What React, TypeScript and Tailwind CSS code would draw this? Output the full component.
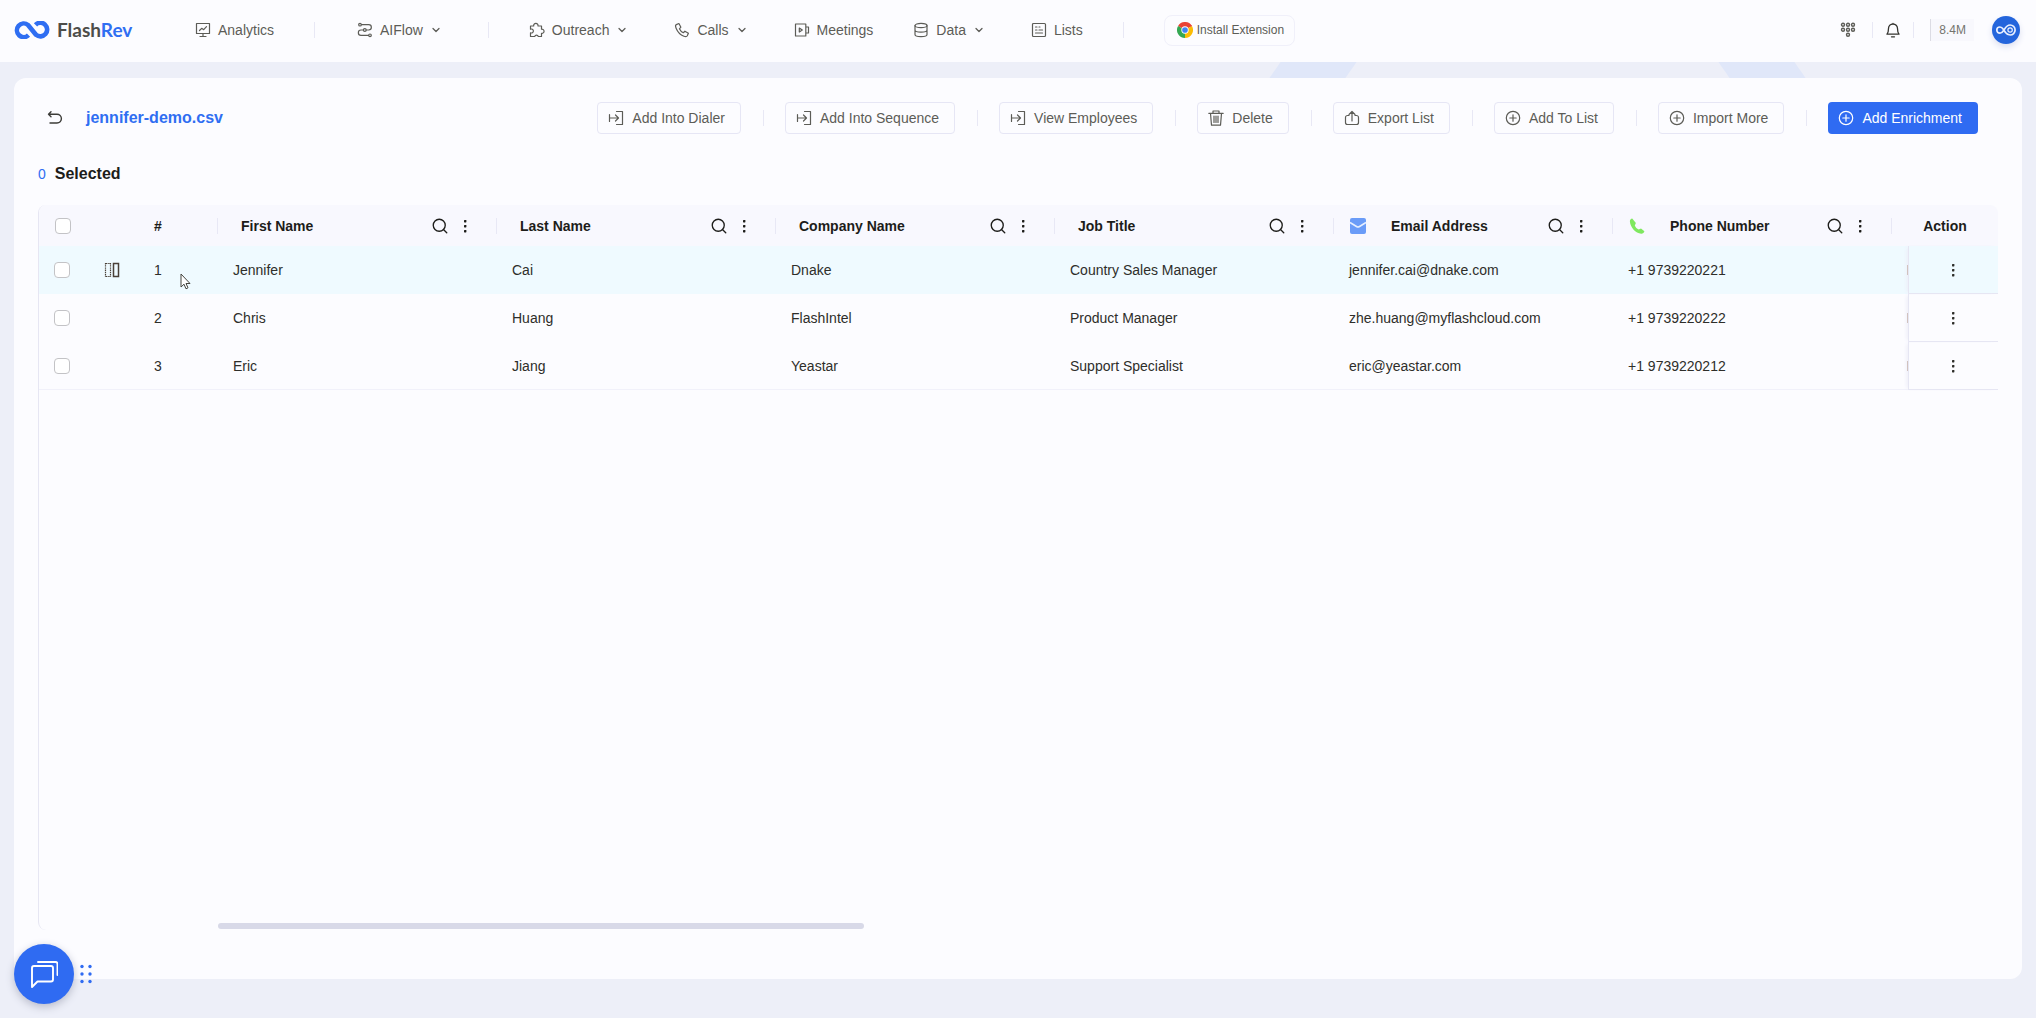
import React from "react";
import { ChevronDown, Search } from "lucide-react";

type IconName = keyof typeof paths;

const paths = {
  analytics: (
    <path d="M1.5 1.5h13v10h-13zM5 14.5h6M8 11.5v3M4.5 8.5l2.2-2.2 2 1.4 2.8-3" />
  ),
  flow: (
    <>
      <circle cx="3" cy="2.7" r="1.3" />
      <circle cx="7.8" cy="8" r="1.4" />
      <circle cx="13" cy="13.3" r="1.3" />
      <path d="M4.5 2.7h7.2a2.6 2.6 0 0 1 0 5.3H9.4M6.2 8H4a2.6 2.6 0 0 0 0 5.3h7.5" />
    </>
  ),
  puzzle: (
    <path d="M1.500 4h3.200a2.200 2.200 0 1 1 4.300 0h3.500v3.200a2.100 2.100 0 1 1 0 4.100v3.200H9.300a1.900 1.900 0 0 0-3.600 0H1.500v-3.700a2 2 0 1 0 0-3.600z" />
  ),
  phone: (
    <path d="M4.9 1.5 2.3 2.6c-.9.5-.9 2-.2 3.6 1.500 3.700 4.300 6.600 7.800 8 1.500.6 2.900.5 3.400-.4l1.100-2.600-3.500-2-1.600 1.500c-1.800-.8-3.100-2.100-3.900-3.900l1.500-1.600z" />
  ),
  meetings: <path d="M1.5 2h10.300v12H1.500zM12 5h2.500v6H12M5.300 6l3 2-3 2z" />,
  data: (
    <>
      <ellipse cx="8" cy="3.5" rx="6" ry="2.2" />
      <path d="M2 3.5v9c0 1.2 2.7 2.2 6 2.2s6-1 6-2.2v-9M2 8c0 1.2 2.7 2.2 6 2.2s6-1 6-2.2" />
    </>
  ),
  lists: (
    <>
      <rect x="1.5" y="1.5" width="13" height="13" rx="1" />
      <path d="M4.5 5h1.500M4.500 8h1.500M8 8h3.500M4.500 11h7M8 5h1" />
    </>
  ),
  enter: <path d="M8.5 1.5h6v13h-6M1.5 4.500v7M1.5 8h9M7.5 5l3 3-3 3" />,
  trash: (
    <path d="M.8 3.300h14.400M5 3.200V1h6v2.200M2.500 3.500l1 11.700h9l1-11.700M6 6v6.500M8 6v6.500M10 6v6.500" />
  ),
  export: <path d="M5 5.500H3.500a2 2 0 0 0-2 2v5a2 2 0 0 0 2 2h9a2 2 0 0 0 2-2v-5a2 2 0 0 0-2-2H11M8 11V1.500M5 4.500l3-3 3 3" />,
  plus: (
    <>
      <circle cx="8" cy="8" r="6.7" />
      <path d="M8 4.800v6.400M4.800 8h6.400" />
    </>
  ),
};

function Icon({ name, className = "size-4" }: { name: IconName; className?: string }) {
  return (
    <svg viewBox="0 0 16 16" className={className} fill="none" stroke="currentColor" strokeWidth="1.2" strokeLinejoin="round" strokeLinecap="round" aria-hidden>
      {paths[name]}
    </svg>
  );
}

function Dots() {
  return (
    <svg viewBox="0 0 4 14" className="h-3.5 w-1" fill="currentColor" aria-hidden>
      <rect x="1" y="1" width="2.4" height="2.4" rx=".6" />
      <rect x="1" y="6" width="2.4" height="2.4" rx=".6" />
      <rect x="1" y="11" width="2.4" height="2.4" rx=".6" />
    </svg>
  );
}

function Divider({ className = "" }: { className?: string }) {
  return <span className={`h-4 w-px shrink-0 bg-[#e8e8f5] ${className}`} />;
}

function NavItem({ icon, label, menu, className = "" }: { icon: IconName; label: string; menu?: boolean; className?: string }) {
  const content = (
    <>
      <Icon name={icon} className="mr-[7px] size-4" />
      {label}
      {menu && <ChevronDown className="ml-[7px] size-3" strokeWidth={2.5} />}
    </>
  );
  const style = `flex shrink-0 items-center whitespace-nowrap ${className}`;
  return menu ? (
    <button type="button" className={style}>{content}</button>
  ) : (
    <a href="#" className={style}>{content}</a>
  );
}

function Chrome() {
  return (
    <svg viewBox="0 0 48 48" className="size-4" aria-hidden>
      <path d="M24 24 3.200 12A24 24 0 0 1 44.800 12z" fill="#ea4335" />
      <path d="M24 24 44.800 12A24 24 0 0 1 24 48z" fill="#fbbc05" />
      <path d="M24 24v24A24 24 0 0 1 3.200 12z" fill="#34a853" />
      <path d="M24 13h20.800l-2-4H24z" fill="#ea4335" />
      <circle cx="24" cy="24" r="11" fill="#fff" />
      <circle cx="24" cy="24" r="8.500" fill="#4285f4" />
    </svg>
  );
}

function Header() {
  return (
    <header className="flex h-[62px] items-center bg-[#fcfcff] pr-4 pb-0.5 pl-3.5 text-sm text-[#5c5c57]">
      <a href="#" className="mr-[61px] flex items-center text-[19px] font-bold text-[#4d4d49]" aria-label="FlashRev">
        <svg viewBox="0 0 36 18" className="mr-[7px] h-[18px] w-9" fill="none" stroke="#2f6ef2" strokeWidth="4.6" aria-hidden>
          <path d="M14.500 14.200A6.800 6.800 0 1 1 14 4l8 9.800a6.800 6.800 0 1 0-.5-10" />
        </svg>
        <span className="w-[77px] font-[Lato,sans-serif]">
          Flash<span className="text-[#2f6ef2]">Rev</span>
        </span>
      </a>
      <nav className="flex items-center" aria-label="Main">
        <NavItem icon="analytics" label="Analytics" />
        <Divider className="ml-10" />
        <NavItem icon="flow" label="AIFlow" menu className="ml-[42px]" />
        <Divider className="ml-[46px]" />
        <NavItem icon="puzzle" label="Outreach" menu className="ml-10" />
        <NavItem icon="phone" label="Calls" menu className="ml-[46px]" />
        <NavItem icon="meetings" label="Meetings" className="ml-[46px]" />
        <NavItem icon="data" label="Data" menu className="ml-10" />
        <NavItem icon="lists" label="Lists" className="ml-[46px]" />
        <Divider className="ml-10" />
        <button type="button" className="ml-10 flex h-[31px] items-center gap-1 rounded-lg border border-[#f0f0fa] pr-2.5 pl-3 text-xs whitespace-nowrap">
          <Chrome />
          Install Extension
        </button>
      </nav>
      <div className="ml-auto flex items-center">
        <button type="button" aria-label="Dial pad">
          <svg viewBox="0 0 16 16" className="size-4" fill="none" stroke="currentColor" strokeWidth="1.4" aria-hidden>
            {[3, 8, 13].map((x) => [2.8, 7.8].map((y) => <circle key={`${x}-${y}`} cx={x} cy={y} r="1.500" />))}
            <circle cx="8" cy="12.800" r="1.500" />
          </svg>
        </button>
        <Divider className="ml-4" />
        <button type="button" aria-label="Notifications" className="ml-3 text-[#33332f]">
          <svg viewBox="0 0 16 16" className="size-4" fill="none" stroke="currentColor" strokeWidth="1.300" strokeLinecap="round" strokeLinejoin="round" aria-hidden>
            <path d="M2 12.200c1.200-1.500 1.500-2.600 1.500-5.700a4.500 4.500 0 0 1 9 0c0 3.100.3 4.200 1.500 5.700zM6.500 14.800h3M8 2V1.500" />
          </svg>
        </button>
        <Divider className="ml-3" />
        <span className="ml-4 flex h-[22px] items-center border-l border-[#dcdce4] bg-[#f8f8fd] px-2 text-xs text-[#74746e]">8.4M</span>
        <button type="button" aria-label="Account" className="ml-[18px] grid size-7 place-items-center rounded-full bg-[#2465dc] shadow-[0_3px_6px_#dcdff0]">
          <svg viewBox="0 0 24 14" className="h-3.5 w-6" fill="none" stroke="#e8efff" aria-hidden>
            <path d="M11.500 9.500 9.300 6.200C8.300 4.700 7.300 4 5.900 4a3.100 3.100 0 1 0 0 6.200c1.900 0 2.800-1.200 4.100-3.200 1.400-2.300 2.800-5 6.100-5a5 5 0 1 1 0 10c-2.200 0-3.500-1-4.600-2.500" strokeWidth="1.700" />
            <circle cx="16.100" cy="7" r="2.200" strokeWidth="1.200" />
          </svg>
        </button>
      </div>
    </header>
  );
}

const actions: { icon: IconName; label: string }[] = [
  { icon: "enter", label: "Add Into Dialer" },
  { icon: "enter", label: "Add Into Sequence" },
  { icon: "enter", label: "View Employees" },
  { icon: "trash", label: "Delete" },
  { icon: "export", label: "Export List" },
  { icon: "plus", label: "Add To List" },
  { icon: "plus", label: "Import More" },
];

const Mail = () => (
  <svg viewBox="0 0 18 18" className="size-[18px]" aria-hidden>
    <rect x="1" y="1" width="16" height="16" rx="2" fill="#6a9cf8" />
    <path d="m1 5.500 6.500 4q1.500.9 3 0l6.500-4" fill="none" stroke="#e6efff" strokeWidth="1.500" />
  </svg>
);

const GreenPhone = () => (
  <svg viewBox="0 0 18 18" className="size-[18px]" fill="#7fe85f" aria-hidden>
    <path d="M4.200 1.400c-1.300.3-2.400 1.300-2.300 3 .4 5.900 5.700 11.700 11.300 12.300 1.600.1 2.800-1 3.200-2.400l-3.400-2.900-2.300 1.200c-1.900-1-3.100-2.400-3.900-4.200l1.100-2.300z" />
  </svg>
);

const columns: { label: string; icon?: React.ReactNode }[] = [
  { label: "First Name" },
  { label: "Last Name" },
  { label: "Company Name" },
  { label: "Job Title" },
  { label: "Email Address", icon: <Mail /> },
  { label: "Phone Number", icon: <GreenPhone /> },
];

const rows = [
  ["Jennifer", "Cai", "Dnake", "Country Sales Manager", "jennifer.cai@dnake.com", "+1 9739220221"],
  ["Chris", "Huang", "FlashIntel", "Product Manager", "zhe.huang@myflashcloud.com", "+1 9739220222"],
  ["Eric", "Jiang", "Yeastar", "Support Specialist", "eric@yeastar.com", "+1 9739220212"],
];

function Checkbox({ label }: { label: string }) {
  return <input type="checkbox" aria-label={label} className="block size-4 appearance-none rounded-sm border border-[#c3c3c6] bg-white checked:bg-blue-600" />;
}

function ContactsTable() {
  return (
    <table className="w-full table-fixed border-separate border-spacing-0 text-left text-sm text-[#2e2e2a]">
      <colgroup>
        <col className="w-[53px]" />
        <col className="w-10" />
        <col className="w-[85px]" />
        {columns.map((c) => <col key={c.label} />)}
        <col className="w-[17px]" />
        <col className="w-[90px]" />
      </colgroup>
      <thead className="bg-[#f8f8fe] text-[#1d1d1a]">
        <tr className="h-[41px]">
          <th className="rounded-tl-lg pl-4"><Checkbox label="Select all rows" /></th>
          <th />
          <th className="pl-[22px]">#</th>
          {columns.map((c) => (
            <th key={c.label} className="p-0">
              <div className="flex items-center pr-7">
                <Divider />
                <span className="ml-[15px] flex items-center">
                  {c.icon}
                  <span className={c.icon ? "ml-6" : "ml-2"}>{c.label}</span>
                </span>
                <button type="button" aria-label={`Search ${c.label}`} className="ml-auto">
                  <Search className="size-[18px]" strokeWidth={1.8} />
                </button>
                <button type="button" aria-label={`${c.label} options`} className="mr-px ml-3.5"><Dots /></button>
              </div>
            </th>
          ))}
          <th className="p-0"><Divider className="block" /></th>
          <th className="rounded-tr-lg pr-4 text-center">Action</th>
        </tr>
      </thead>
      <tbody>
        {rows.map((row, i) => (
          <tr key={row[0]} className={i === 0 ? "h-12 bg-[#effaff]" : "h-12"}>
            <td className={i === 2 ? "border-b border-[#f1f1fa] pl-[15px]" : "pl-[15px]"}><Checkbox label={`Select ${row[0]}`} /></td>
            <td className={i === 2 ? "border-b border-[#f1f1fa]" : ""}>
              {i === 0 && (
                <button type="button" aria-label="Open details" className="ml-3 block text-[#4a4038]">
                  <svg viewBox="0 0 16 16" className="size-4" fill="none" stroke="currentColor" aria-hidden>
                    <path d="M9.500 1.500h5v13h-5z" strokeWidth="1.500" />
                    <path d="M1.500 1v14M6.500 1v14M2 1.500h4M2 14.500h4" strokeWidth="1.200" strokeDasharray="1.400 .8" />
                  </svg>
                </button>
              )}
            </td>
            <td className={i === 2 ? "border-b border-[#f1f1fa] pl-[22px]" : "pl-[22px]"}>{i + 1}</td>
            {row.map((cell) => (
              <td key={cell} className={i === 2 ? "truncate border-b border-[#f1f1fa] pl-4" : "truncate pl-4"}>{cell}</td>
            ))}
            <td className={i === 2 ? "border-b border-[#f1f1fa] p-0" : "p-0"}><span className="ml-auto block h-2.5 w-px bg-[#a9836c]" /></td>
            <td className="border-b border-l border-[#e6e6f3] p-0 pr-0.5 shadow-[-3px_0_4px_-2px_#ececf7]">
              <button type="button" aria-label={`Actions for ${row[0]}`} className="mx-auto block"><Dots /></button>
            </td>
          </tr>
        ))}
      </tbody>
    </table>
  );
}

export default function App() {
  return (
    <div className="relative flex min-h-screen flex-col bg-[#edeff8] font-['Liberation_Sans',Arial,sans-serif]">
      <Header />
      <div className="flex h-4 justify-end overflow-hidden pr-[236px]" aria-hidden>
        <span className="mr-[373px] w-[76px] -skew-x-[35deg] bg-[#e0e7f9]" />
        <span className="w-[76px] skew-x-[35deg] bg-[#e0e7f9]" />
      </div>
      <main className="mx-3.5 mb-[39px] flex flex-1 flex-col rounded-xl bg-[#fcfcff] px-6 pt-6">
        <div className="flex items-center pr-5 pl-[9px]">
          <button type="button" aria-label="Back" className="text-[#3c3c38]">
            <svg viewBox="0 0 16 16" className="size-4" fill="none" stroke="currentColor" strokeWidth="1.400" strokeLinecap="round" strokeLinejoin="round" aria-hidden>
              <path d="M3 13h7a4.300 4.300 0 0 0 0-8.800H1.500M4 1.700 1.500 4.200 4 6.700" />
            </svg>
          </button>
          <h1 className="ml-[23px] font-bold text-[#2f6ef2]">jennifer-demo.csv</h1>
          <div className="ml-auto flex items-center text-sm whitespace-nowrap text-[#5c5c57]">
            {actions.map((a) => (
              <React.Fragment key={a.label}>
                <button type="button" className="flex h-8 items-center gap-2 rounded border border-[#e6e6f5] pr-[15px] pb-px pl-2.5">
                  <Icon name={a.icon} />
                  {a.label}
                </button>
                <Divider className="mr-[21px] ml-[22px]" />
              </React.Fragment>
            ))}
            <button type="button" className="flex h-8 items-center gap-2 rounded bg-[#2f6bf2] pr-4 pb-px pl-2.5 text-white">
              <Icon name="plus" />
              Add Enrichment
            </button>
          </div>
        </div>
        <p className="mt-7 flex items-center leading-6 text-[#1d1d1a]">
          <span className="mr-[9px] text-sm text-[#2f6ef2]">0</span>
          <strong>Selected</strong>
        </p>
        <section className="mt-[19px] flex flex-1 flex-col rounded-l-lg border-l border-[#e6e6f3]" aria-label="Contacts">
          <ContactsTable />
          <div className="mt-auto mb-px ml-[179px] h-1.5 w-[33%] rounded-full bg-[#d8d9e8]" />
        </section>
        <div className="h-[49px]" />
      </main>
      <div className="absolute bottom-3.5 left-3.5 flex items-center gap-1.5 text-[#2f6bf2]">
        <button type="button" aria-label="Open chat" className="grid size-[60px] place-items-center rounded-full bg-[#2f6bf2] shadow-[0_3px_8px_#b9bccb]">
          <svg viewBox="0 0 28 28" className="size-7" fill="none" stroke="#fff" strokeWidth="1.9" strokeLinejoin="round" strokeLinecap="round" aria-hidden>
            <path d="M2 27V8a2 2 0 0 1 2-2h17a2 2 0 0 1 2 2v11.500a2 2 0 0 1-2 2H7.500zM8 2h17.500a2 2 0 0 1 2 2v11" />
          </svg>
        </button>
        <button type="button" aria-label="Move chat">
          <svg viewBox="0 0 12 20" className="h-5 w-3" fill="currentColor" aria-hidden>
            {[2, 10].map((x) => [2.5, 10, 17.5].map((y) => <circle key={`${x}-${y}`} cx={x} cy={y} r="1.7" />))}
          </svg>
        </button>
      </div>
      <svg viewBox="0 0 12 17" className="pointer-events-none absolute top-[273px] left-[180px] h-[17px] w-3" fill="#fff" stroke="#44443f" aria-hidden>
        <path d="M1 1v13l3-2.800 2 4.600 2-1-2-4.300h4z" />
      </svg>
    </div>
  );
}
